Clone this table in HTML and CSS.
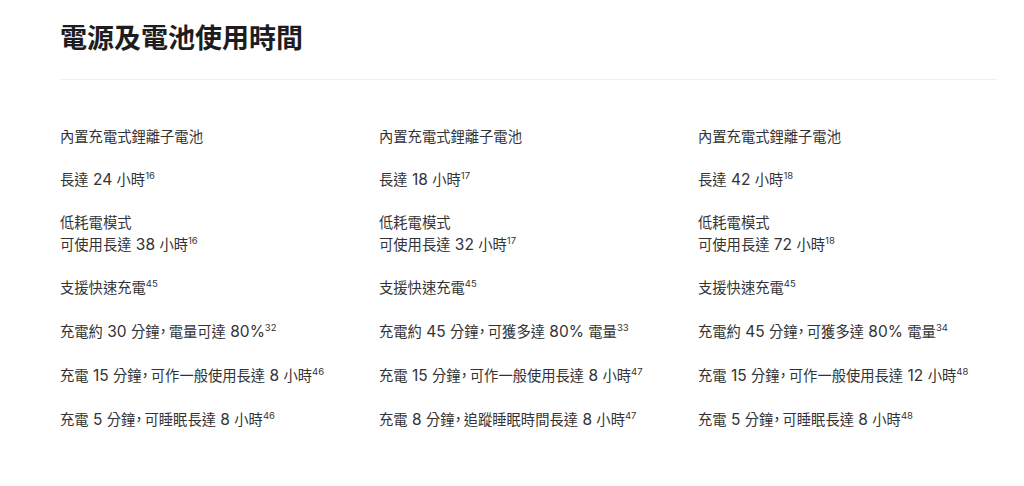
FILE: index.html
```html
<!DOCTYPE html>
<html lang="zh-Hant">
<head>
<meta charset="utf-8">
<title>電源及電池使用時間</title>
<link rel="stylesheet" href="styles.css">
</head>
<body>
<section class="section">
  <header class="section-head">
    <h1 class="title">電源及電池使用時間</h1>
  </header>
  <div class="columns">
    <div class="col">
      <p class="item">內置充電式鋰離子電池</p>
      <p class="item">長達<span class="num"> 24 </span>小時<sup class="fn">16</sup></p>
      <p class="item">低耗電模式<br>可使用長達<span class="num"> 38 </span>小時<sup class="fn">16</sup></p>
      <p class="item">支援快速充電<sup class="fn">45</sup></p>
      <p class="item">充電約<span class="num"> 30 </span>分鐘<span class="punc">，</span>電量可達<span class="num"> 80%</span><sup class="fn">32</sup></p>
      <p class="item">充電<span class="num"> 15 </span>分鐘<span class="punc">，</span>可作一般使用長達<span class="num"> 8 </span>小時<sup class="fn">46</sup></p>
      <p class="item">充電<span class="num"> 5 </span>分鐘<span class="punc">，</span>可睡眠長達<span class="num"> 8 </span>小時<sup class="fn">46</sup></p>
    </div>
    <div class="col">
      <p class="item">內置充電式鋰離子電池</p>
      <p class="item">長達<span class="num"> 18 </span>小時<sup class="fn">17</sup></p>
      <p class="item">低耗電模式<br>可使用長達<span class="num"> 32 </span>小時<sup class="fn">17</sup></p>
      <p class="item">支援快速充電<sup class="fn">45</sup></p>
      <p class="item">充電約<span class="num"> 45 </span>分鐘<span class="punc">，</span>可獲多達<span class="num"> 80% </span>電量<sup class="fn">33</sup></p>
      <p class="item">充電<span class="num"> 15 </span>分鐘<span class="punc">，</span>可作一般使用長達<span class="num"> 8 </span>小時<sup class="fn">47</sup></p>
      <p class="item">充電<span class="num"> 8 </span>分鐘<span class="punc">，</span>追蹤睡眠時間長達<span class="num"> 8 </span>小時<sup class="fn">47</sup></p>
    </div>
    <div class="col">
      <p class="item">內置充電式鋰離子電池</p>
      <p class="item">長達<span class="num"> 42 </span>小時<sup class="fn">18</sup></p>
      <p class="item">低耗電模式<br>可使用長達<span class="num"> 72 </span>小時<sup class="fn">18</sup></p>
      <p class="item">支援快速充電<sup class="fn">45</sup></p>
      <p class="item">充電約<span class="num"> 45 </span>分鐘<span class="punc">，</span>可獲多達<span class="num"> 80% </span>電量<sup class="fn">34</sup></p>
      <p class="item">充電<span class="num"> 15 </span>分鐘<span class="punc">，</span>可作一般使用長達<span class="num"> 12 </span>小時<sup class="fn">48</sup></p>
      <p class="item">充電<span class="num"> 5 </span>分鐘<span class="punc">，</span>可睡眠長達<span class="num"> 8 </span>小時<sup class="fn">48</sup></p>
    </div>
  </div>
</section>
</body>
</html>
```

FILE: styles.css
```css
html, body {
  margin: 0;
  padding: 0;
  background: #ffffff;
}

body {
  font-family: "Inter", "Noto Sans CJK TC", sans-serif;
  color: #333336;
}

.section {
  padding: 23px 0 0 60px;
  width: 937px;
}

.section-head {
  padding-bottom: 24px;
  border-bottom: 1px solid #f0f0f0;
}

.title {
  margin: 0;
  font-family: "Inter", "Noto Sans CJK TC", sans-serif;
  font-size: 27px;
  line-height: 32px;
  font-weight: 700;
  color: #1d1d1f;
}

.columns {
  display: grid;
  grid-template-columns: 299px 299px 299px;
  column-gap: 20px;
  margin-top: 46px;
}

.col {
  display: flex;
  flex-direction: column;
  gap: 21px;
}

.item {
  margin: 0;
  font-size: 14.3px;
  line-height: 22px;
  white-space: nowrap;
}

.num {
  font-size: 15.5px;
}

.punc {
  font-family: "Noto Sans CJK JP", sans-serif;
  font-feature-settings: "halt" 1;
  margin-right: 2px;
}

.fn {
  font-size: 9.5px;
  line-height: 0;
  vertical-align: 6px;
}
```
